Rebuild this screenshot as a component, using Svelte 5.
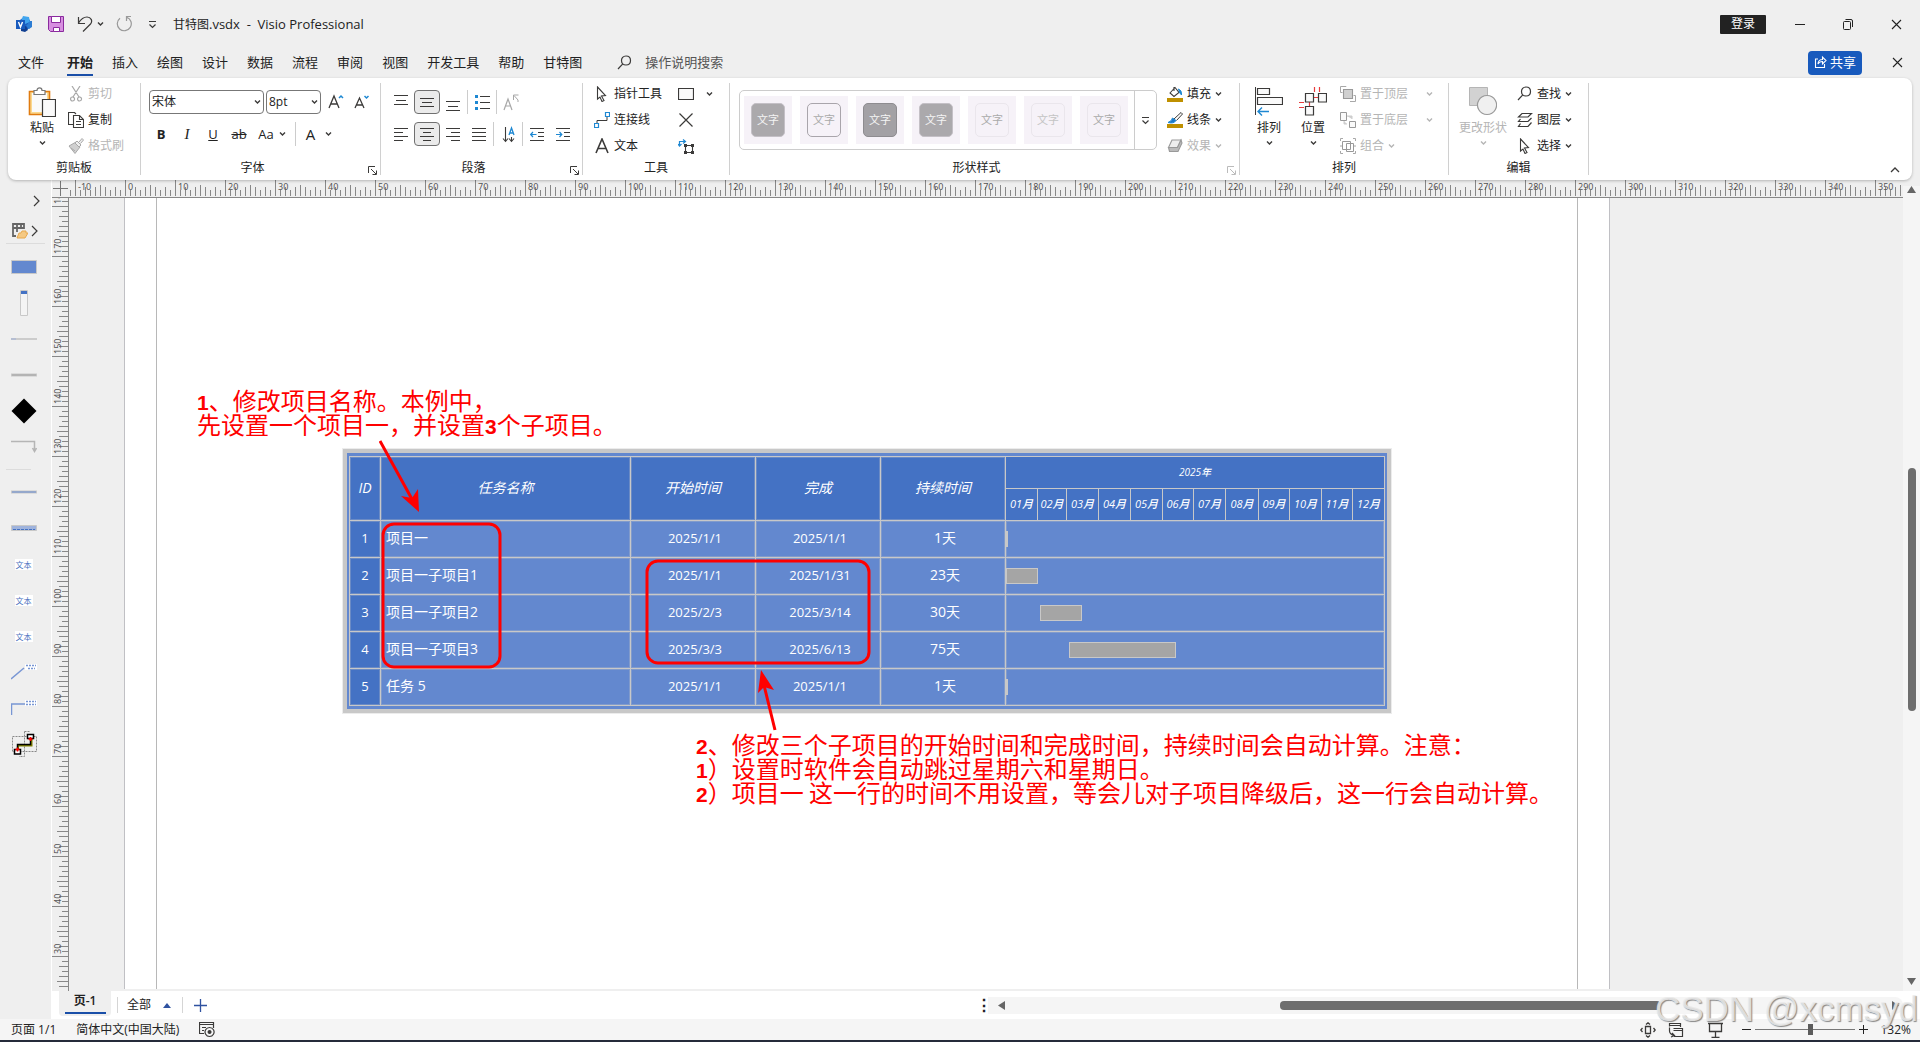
<script lang="ts">
  type Shape = [d: string, stroke?: string, fill?: string, width?: number];

  const ink = '#3b3a39';
  const blue = '#1e88d2';
  const dim = '#a8a8a8';
  const navy = '#2f52a0';

  const icons: Record<string, Shape[]> = {
    visio: [
      ['M8 1L14 4V12L8 15L4 12V4Z', 'none', '#1b5fc4'],
      ['M7 0L13 1L14 6L9 8L5 5Z', 'none', '#41a5ee'],
      ['M14 5H16V11L13 13L10 10Z', 'none', '#2b7cd3'],
      ['M5 12L10 10L12 14L9 16L5 15Z', 'none', '#103f91'],
      ['M0 4H9V13H0Z', 'none', '#185abd'],
      ['M2.500 6L4.500 11L6.500 6', '#fff', 'none', 1.4],
    ],
    save: [
      ['M.5 .5H15.500V15.500H2.500L.5 13.500Z', '#8a2a9e', '#d78fe0'],
      ['M3.500 .5H12.500V6.500H3.500Z', '#8a2a9e', '#fff'],
      ['M5.500 11.500H11.500V15.500H5.500Z', '#8a2a9e', '#fff'],
    ],
    undo: [['M1.500 1V7.500H8M1.500 7C4 3 7 1 10 1C14 1 16 5 13.500 8L6 15.500', ink, 'none', 1.2]],
    redo: [['M15 .5H10.500V5M10.800 1.200A7 7 0 1 1 4 2.200', '#999', 'none', 1.2]],
    customize: [['M1 1.500H8M1.500 4.500L4.500 7.500L7.500 4.500', ink, 'none', 1.2]],
    chevron: [['M1 1.500L3.500 4L6 1.500', ink, 'none', 1.4]],
    chevronDim: [['M1 1.500L3.500 4L6 1.500', '#b5b5b5', 'none', 1.4]],
    right: [['M1 1L6 6L1 11', ink, 'none', 1.2]],
    up: [['M1 6L5 2L9 6', ink, 'none', 1.3]],
    min: [['M0 5.500H10', '#222']],
    restore: [
      ['M.5 3.500Q.5 2.500 1.500 2.500H6.500Q7.500 2.500 7.500 3.500V9.500Q7.500 10.500 6.500 10.500H1.500Q.5 10.500 .5 9.500Z', '#222'],
      ['M2.500 .5H8Q9.500 .5 9.500 2V8', '#222'],
    ],
    close: [['M1 1L10 10M10 1L1 10', '#222', 'none', 1.1]],
    share: [['M4 4H1.500V12.500H10.500V9M4 9C4 6 6 4.500 8.500 4.500V2L12 5.500L8.500 9V6.500C6.500 6.500 5 7 4 9Z', '#fff', 'none', 1.1]],
    search: [['M9 1C12 1 13.500 3 13.500 5.500C13.500 8 12 10 9 10C6 10 4.500 8 4.500 5.500C4.500 3 6 1 9 1ZM5.800 8.800L1 14', ink, 'none', 1.2]],
    paste: [
      ['M1.500 4.500H21.500V27.500H1.500Z', '#e07b10', '#fbd98f', 1.6],
      ['M4 6H19V25H4Z', 'none', '#fafafa'],
      ['M6 7.500V3.500H9C9 0 14 0 14 3.500H17V7.500Z', '#777', '#fff', 1.2],
      ['M14.500 12.500H27.500V29.500H14.500Z', ink, '#fafafa', 1.2],
    ],
    cut: [['M4 0L11 11M12 0L5 11M4.500 11A2 2 0 1 0 4.600 15A2 2 0 1 0 4.500 11M11.500 11A2 2 0 1 0 11.600 15A2 2 0 1 0 11.500 11', dim, 'none', 1.2]],
    copy: [['M5 12.500H.5V.5H6.500L8 2M5.500 3.500H11.500L15.500 7.500V15.500H5.500ZM11.500 3.500V7.500H15.500M8 9.500H13M8 12.500H13', ink, '#fff', 1.1]],
    brush: [
      ['M1 8L8 4L12 9L7 15.500Z', dim, '#d0d0d0'],
      ['M7 5L9 3L13 7L11 9ZM11 4L14 .5L15.500 2L12.500 5.500M3 10L7 13', dim, '#eee'],
    ],
    fontUp: [['M1 14L6 2L11 14M3 10H9', ink, 'none', 1.3], ['M11 4L13 2L15 4', blue, 'none', 1.5]],
    fontDown: [['M1 14L5.500 4L10 14M2.500 11H8.500', ink, 'none', 1.3], ['M10.500 2L12.500 4L14.500 2', blue, 'none', 1.5]],
    alignTop: [['M0 1.500H14M2 6.500H12M0 10.500H14', ink]],
    alignMid: [['M0 4.500H14M2 8.500H12M0 12.500H14', ink]],
    alignBot: [['M0 7.500H14M2 12.500H12M0 16.500H14', ink]],
    bullets: [['M5 2.500H15M5 8.500H15M5 14.500H15', ink], ['M0 1H3V4H0ZM0 7H3V10H0ZM0 13H3V16H0Z', 'none', blue]],
    rotateText: [['M1 16L5 5L9 16M2.500 12H7.500', dim, 'none', 1.2], ['M15 8V6L11 1.500M10.500 6V1H15.500', dim]],
    left: [['M0 2.500H14M0 6.500H9M0 10.500H14M0 14.500H9', ink]],
    center: [['M0 2.500H14M3 6.500H11M0 10.500H14M3 14.500H11', ink]],
    rightAlign: [['M0 2.500H14M5 6.500H14M0 10.500H14M5 14.500H14', ink]],
    justify: [['M0 2.500H14M0 6.500H14M0 10.500H14M0 14.500H14', ink]],
    direction: [['M3.500 1V15M1 12.500L3.500 15.500L6 12.500M9.500 11V15M7 12.500L9.500 15.500L12 12.500', ink, 'none', 1.1], ['M7 9L9.500 2L12 9M8 7H11', blue, 'none', 1.3]],
    outdent: [['M0 2.500H14M8 6.500H14M8 10.500H14M0 14.500H14', ink], ['M6.500 8.500H1M3 6L.7 8.500L3 11', blue, 'none', 1.2]],
    indent: [['M0 2.500H14M8 6.500H14M8 10.500H14M0 14.500H14', ink], ['M0 8.500H5.500M3.500 6L5.800 8.500L3.500 11', blue, 'none', 1.2]],
    pointer: [['M3.500 1L11.500 9.500L7.500 10L10 14.500L8 15.500L6 11L3.500 13Z', ink, '#fff', 1.1]],
    connector: [['M3 11V8.500H13V5', ink], ['M.5 11.500H4.500V15.500H.5ZM11.500 .5H15.500V4.500H11.500Z', blue, '#fff', 1.2]],
    text: [['M2 15L8 1L14 15M4 10.500H12', ink, 'none', 1.6]],
    rect: [['M.5 2.500H15.500V13.500H.5Z', ink, '#fafafa', 1.2]],
    cross: [['M1.500 1.500L14.500 14.500M14.500 1.500L1.500 14.500', ink, 'none', 1.2]],
    textBlock: [
      ['M1.500 8V3.500H7M0 6L1.500 8L3.500 6M5 1.500L7.500 3.500L5 5.500', blue, 'none', 1.2],
      ['M7.500 7.500H14.500V14.500H7.500Z', ink, 'none', 1.1],
      ['M6 6H9V9H6ZM13 6H16V9H13ZM6 13H9V16H6ZM13 13H16V16H13Z', 'none', ink],
    ],
    fill: [['M3 7L8 1.500L12 6.500L7 10.500ZM7 1V5', ink, '#fff', 1.1], ['M11 3Q15 4 14.500 9L12 6', blue, blue], ['M0 12H16V16H0Z', 'none', '#bf9000']],
    line: [['M7 7L14 .5L15.500 2L9.500 8.500', ink, '#fff'], ['M1 10.500Q5 9 5.500 6L9 8.500Q7 12 1 10.500Z', blue, '#1e78c8'], ['M0 12H16V16H0Z', 'none', '#bf9000']],
    effect: [['M5 2H14L10.500 9.500H1.500Z', '#999', '#eee', 1.1], ['M1.500 9.500H10.500L14 2L15 5L11 13.500H2.500Z', '#999', '#bbb', 1.1]],
    align: [['M.5 0V28', ink], ['M2.500 1.500H14.500V7.500H2.500ZM2.500 10.500H27.500V17.500H2.500Z', ink, '#fafafa', 1.2], ['M14 24.500H3M7 20.500L3 24.500L7 28.500', blue, 'none', 1.4]],
    position: [['M15.500 0V5M20.500 0V5M0 15.500H5M0 20.500H5M15 10.500H20M10.500 15V20', '#e83c3c', 'none', 1.2], ['M6.500 6.500H14.500V15H6.500ZM19.500 6.500H27.500V15H19.500ZM6.500 19.500H14.500V28H6.500Z', ink, '#fafafa', 1.2]],
    front: [['M6 1V.5H.5V6.500H2.500M10 15.500H15.500V9.500H13.500', dim], ['M3.500 3.500H12.500V12.500H3.500Z', '#999', '#d0d0d0', 1.1]],
    back: [['M7 4H12V7M4 9V12H7', '#ccc', '#d0d0d0'], ['M.5 .5H6.500V8.500H.5ZM9.500 9.500H15.500V15.500H9.500Z', '#999', '#fafafa']],
    group: [['M.5 3V.5H3M13 .5H15.500V3M15.500 13V15.500H13M3 15.500H.5V13M0 8H3M13 8H16', dim], ['M2.500 3.500H10.500V11.500H2.500ZM6.500 5.500H13.500V13.500H6.500Z', '#999']],
    shapes: [['M.5 .5H18.500V18.500H.5Z', '#b5b5b5', '#d2d2d2'], ['M18 8.500A9.500 9.500 0 1 0 18.100 8.500Z', '#999', '#f0f0f0', 1.2]],
    layers: [['M5 1.500H14.500L11 5H1.500ZM3.500 7L1.500 9.500H11L14.500 6M3.500 11.500L1.500 14.500H11L14.500 10.500', ink, 'none', 1.2]],
    launcher: [['M.5 7V.5H7M3 3L8 8M8.500 4.500V8.500H4.500', ink]],
    launcherDim: [['M.5 7V.5H7M3 3L8 8M8.500 4.500V8.500H4.500', '#bbb']],
    stencil: [['M1 14V1H12V6M1 5H12M5 1V9M9 1V5M1 13H4', '#666', 'none', 1.8], ['M5 15L7 10H9L10 8H14V10H16L13 15Z', '#e8a94d', '#f5c983']],
    plus: [['M6.500 0V13M0 6.500H13', navy, 'none', 1.3]],
    macro: [['M5 11.500H.5V.5H14.500V6M1 2.500H14M3 5.500H7M3 8.500H5', ink, 'none', 1.2], ['M10.500 5.500A4.500 4.500 0 1 0 10.600 5.500Z', ink, '#f5f5f5', 1.2], ['M10.500 8A2 2 0 1 0 10.600 8Z', 'none', ink]],
    pan: [['M5.500 4.500H10.500V11.500H5.500ZM6 2.500L8 .8L10 2.500M6 13.500L8 15.200L10 13.500M2.500 6L.8 8L2.500 10M13.500 6L15.200 8L13.500 10', ink, 'none', 1.3]],
    windows: [['M1.500 4.500V1.500H12.500V5M1.500 3.500H12.500M5.500 6.500H14.500V14.500H6M5.500 8.500H14.500M1.500 5.500V9Q1.500 12 6 13.500M4 11L6.500 13.500L3 15', ink, 'none', 1.2]],
    present: [['M0 1.500H15M1.500 1.500V9.500H13.500V1.500M7.500 10V15M3.500 15.500H11.500', ink, 'none', 1.3]],
  };

  const tabs = ['插入', '绘图', '设计', '数据', '流程', '审阅', '视图', '开发工具', '帮助', '甘特图'];

  const styles = ['solid', 'outline', 'solid dark', 'solid', 'faint', 'faint pale', 'faint'];

  const months = [
    { label: '01月', width: 32 },
    { label: '02月', width: 29 },
    { label: '03月', width: 32 },
    { label: '04月', width: 32 },
    { label: '05月', width: 32 },
    { label: '06月', width: 31 },
    { label: '07月', width: 32 },
    { label: '08月', width: 33 },
    { label: '09月', width: 31 },
    { label: '10月', width: 32 },
    { label: '11月', width: 31 },
    { label: '12月', width: 32 },
  ];

  // from / to are day numbers inside 2025
  const tasks = [
    { id: 1, name: '项目一', start: '2025/1/1', end: '2025/1/1', span: '1天', from: 0, to: 1 },
    { id: 2, name: '项目一子项目1', start: '2025/1/1', end: '2025/1/31', span: '23天', from: 0, to: 31 },
    { id: 3, name: '项目一子项目2', start: '2025/2/3', end: '2025/3/14', span: '30天', from: 33, to: 73 },
    { id: 4, name: '项目一子项目3', start: '2025/3/3', end: '2025/6/13', span: '75天', from: 61, to: 164 },
    { id: 5, name: '任务 5', start: '2025/1/1', end: '2025/1/1', span: '1天', from: 0, to: 1 },
  ];

  const day = (n: number) => `${(n / 365) * 100}%`;

  // Rulers: one tick every 5px, a label every 50px
  let rulerWidth = $state(0);
  let rulerHeight = $state(0);

  const tickLength = (i: number) => (i % 10 === 0 ? 16 : i % 5 === 0 ? 11 : i % 2 === 0 ? 9 : 6);

  const topTicks = $derived.by(() => {
    let d = '';
    for (let i = -11; 56 + i * 5 < rulerWidth; i++) {
      d += `M${56.5 + i * 5} 16v-${tickLength(i)}`;
    }
    return d;
  });
  const topLabels = $derived(
    Array.from({ length: Math.max(0, Math.floor((rulerWidth - 25) / 50) + 1) }, (_, i) => (i - 1) * 10)
  );

  const sideTicks = $derived.by(() => {
    let d = '';
    for (let i = -1; 8 + i * 5 < rulerHeight; i++) {
      d += `M16 ${8.5 + i * 5}h-${tickLength(i)}`;
    }
    return d;
  });
  const sideLabels = $derived(
    Array.from({ length: Math.max(0, Math.floor(rulerHeight / 50) + 1) }, (_, i) => 180 - i * 10)
  );
</script>

{#snippet icon(name: string, w = 16, h = 16)}
  <svg class="icon" width={w} height={h} viewBox="0 0 {w} {h}" aria-hidden="true">
    {#each icons[name] as [d, stroke = '#3b3a39', fill = 'none', width = 1]}
      <path {d} {stroke} {fill} stroke-width={width} />
    {/each}
  </svg>
{/snippet}

{#snippet tool(name: string, label: string, arrow = false, disabled = false)}
  <button class="tool" {disabled}>
    {@render icon(name)}
    <span>{label}</span>
    {#if arrow}{@render icon(disabled ? 'chevronDim' : 'chevron', 7, 6)}{/if}
  </button>
{/snippet}

<div class="app">
  <header class="titlebar">
    {@render icon('visio')}
    <button class="save" aria-label="保存">{@render icon('save')}</button>
    <button class="undo" aria-label="撤消">{@render icon('undo')}{@render icon('chevron', 7, 6)}</button>
    <button class="redo" aria-label="恢复">{@render icon('redo')}</button>
    <button class="customize" aria-label="自定义">{@render icon('customize', 9, 9)}</button>
    <span>甘特图<span class="latin">.vsdx&nbsp; -&nbsp; Visio Professional</span></span>
    <div class="window-buttons">
      <button class="login">登录</button>
      <button aria-label="最小化">{@render icon('min', 10, 11)}</button>
      <button aria-label="还原">{@render icon('restore', 10, 11)}</button>
      <button aria-label="关闭">{@render icon('close', 11, 11)}</button>
    </div>
  </header>

  <nav class="tabs">
    <button class="file">文件</button>
    <button class="active">开始</button>
    {#each tabs as tab}
      <button>{tab}</button>
    {/each}
    <button class="tell-me">{@render icon('search', 15, 15)}操作说明搜索</button>
    <button class="share">{@render icon('share', 13, 14)}共享</button>
    <button class="close-doc" aria-label="关闭文档">{@render icon('close', 11, 11)}</button>
  </nav>

  <div class="ribbon">
    <section class="group clipboard">
      <div class="body">
        <button class="big">{@render icon('paste', 28, 31)}<span>粘贴</span>{@render icon('chevron', 7, 6)}</button>
        <div class="stack">
          {@render tool('cut', '剪切', false, true)}
          {@render tool('copy', '复制')}
          {@render tool('brush', '格式刷', false, true)}
        </div>
      </div>
      <h2>剪贴板</h2>
    </section>

    <section class="group font launchable">
      <div class="rows">
        <div class="row">
          <label class="combo family">
            <select aria-label="字体"><option>宋体</option></select>
            {@render icon('chevron', 7, 6)}
          </label>
          <label class="combo size">
            <select aria-label="字号"><option>8pt</option></select>
            {@render icon('chevron', 7, 6)}
          </label>
          <button class="flat" aria-label="增大字号">{@render icon('fontUp')}</button>
          <button class="flat" aria-label="减小字号">{@render icon('fontDown')}</button>
        </div>
        <div class="row letters">
          <button class="flat bold">B</button>
          <button class="flat italic">I</button>
          <button class="flat underline">U</button>
          <button class="flat strike">ab</button>
          <button class="flat wide">Aa{@render icon('chevron', 7, 6)}</button>
          <i class="sep"></i>
          <button class="flat wide colour">A{@render icon('chevron', 7, 6)}</button>
        </div>
      </div>
      <h2>字体</h2>
      <button class="launcher" aria-label="字体设置">{@render icon('launcher', 9, 9)}</button>
    </section>

    <section class="group paragraph launchable">
      <div class="rows">
        <div class="row">
          <button class="flat" aria-label="顶端对齐">{@render icon('alignTop', 14, 17)}</button>
          <button class="flat on" aria-label="中部对齐">{@render icon('alignMid', 14, 17)}</button>
          <button class="flat" aria-label="底端对齐">{@render icon('alignBot', 14, 17)}</button>
          <i class="sep"></i>
          <button class="flat" aria-label="项目符号">{@render icon('bullets', 15, 17)}</button>
          <i class="sep"></i>
          <button class="flat" aria-label="旋转文本">{@render icon('rotateText', 16, 17)}</button>
        </div>
        <div class="row">
          <button class="flat" aria-label="左对齐">{@render icon('left', 14, 17)}</button>
          <button class="flat on" aria-label="居中">{@render icon('center', 14, 17)}</button>
          <button class="flat" aria-label="右对齐">{@render icon('rightAlign', 14, 17)}</button>
          <button class="flat" aria-label="两端对齐">{@render icon('justify', 14, 17)}</button>
          <i class="sep"></i>
          <button class="flat" aria-label="文字方向">{@render icon('direction', 13, 17)}</button>
          <i class="sep"></i>
          <button class="flat" aria-label="减少缩进">{@render icon('outdent', 14, 17)}</button>
          <button class="flat" aria-label="增加缩进">{@render icon('indent', 14, 17)}</button>
        </div>
      </div>
      <h2>段落</h2>
      <button class="launcher" aria-label="段落设置">{@render icon('launcher', 9, 9)}</button>
    </section>

    <section class="group tools">
      <div class="body">
        <div class="stack">
          {@render tool('pointer', '指针工具')}
          {@render tool('connector', '连接线')}
          {@render tool('text', '文本')}
        </div>
        <div class="stack second">
          <button class="tool" aria-label="矩形">{@render icon('rect')}<span class="arrow">{@render icon('chevron', 7, 6)}</span></button>
          <button class="tool" aria-label="连接点">{@render icon('cross')}</button>
          <button class="tool" aria-label="文本块">{@render icon('textBlock')}</button>
        </div>
      </div>
      <h2>工具</h2>
    </section>

    <section class="group shape-styles launchable">
      <div class="body">
        <div class="gallery">
          {#each styles as style}
            <button class="swatch"><span class={style}>文字</span></button>
          {/each}
          <button class="more" aria-label="更多样式">{@render icon('customize', 9, 9)}</button>
        </div>
        <div class="stack">
          {@render tool('fill', '填充', true)}
          {@render tool('line', '线条', true)}
          {@render tool('effect', '效果', true, true)}
        </div>
      </div>
      <h2>形状样式</h2>
      <button class="launcher" disabled aria-label="形状样式设置">{@render icon('launcherDim', 9, 9)}</button>
    </section>

    <section class="group arrange">
      <div class="body">
        <button class="big">{@render icon('align', 28, 31)}<span>排列</span>{@render icon('chevron', 7, 6)}</button>
        <button class="big">{@render icon('position', 28, 31)}<span>位置</span>{@render icon('chevron', 7, 6)}</button>
        <div class="stack">
          <div class="split">{@render tool('front', '置于顶层', true, true)}</div>
          <div class="split">{@render tool('back', '置于底层', true, true)}</div>
          {@render tool('group', '组合', true, true)}
        </div>
      </div>
      <h2>排列</h2>
    </section>

    <section class="group edit">
      <div class="body">
        <button class="big" disabled>{@render icon('shapes', 28, 31)}<span>更改形状</span>{@render icon('chevronDim', 7, 6)}</button>
        <div class="stack">
          {@render tool('search', '查找', true)}
          {@render tool('layers', '图层', true)}
          {@render tool('pointer', '选择', true)}
        </div>
      </div>
      <h2>编辑</h2>
    </section>
    <button class="collapse" aria-label="折叠功能区">{@render icon('up', 10, 8)}</button>
  </div>

  <div class="main">
    <aside class="stencils">
      <button class="expand" aria-label="展开形状窗口">{@render icon('right', 8, 12)}</button>
      <button class="more-shapes" aria-label="更多形状">{@render icon('stencil')}{@render icon('right', 8, 12)}</button>
      <hr />
      <button class="shape" aria-label="甘特图框架"><svg width="26" height="26"><path d="M.5 6.500H25.500V19.500H.5Z" fill="#6388cf" stroke="#c8c8c8" /></svg></button>
      <button class="shape" aria-label="列"><svg width="26" height="26"><path d="M9.500 .5H16.500V25.500H9.500Z" fill="#f4f4f4" stroke="#c8c8c8" /><path d="M10 1H16V4H10Z" fill="#4472c4" /></svg></button>
      <button class="shape" aria-label="行"><svg width="26" height="26"><path d="M0 13H26" stroke="#ccc" stroke-width="2" /><path d="M0 13H5" stroke="#9fb0d8" /></svg></button>
      <button class="shape" aria-label="任务栏"><svg width="26" height="26"><path d="M0 13H26" stroke="#c8c8c8" stroke-width="3" /><path d="M1 13H25" stroke="#a0a0a0" /></svg></button>
      <button class="shape" aria-label="里程碑"><svg width="26" height="26"><path d="M13 .5L25.500 13L13 25.500L.5 13Z" fill="#000" /></svg></button>
      <button class="shape" aria-label="链接线"><svg width="26" height="26"><path d="M0 7.500H23.500V17M21.500 14L23.500 17.500L25.500 14" fill="none" stroke="#b5b5b5" stroke-width="1.500" /></svg></button>
      <hr class="short" />
      <button class="shape" aria-label="标题"><svg width="26" height="26"><path d="M0 13H26" stroke="#c8c8c8" stroke-width="3" /><path d="M1 13H25" stroke="#6388cf" /></svg></button>
      <button class="shape" aria-label="图例"><svg width="26" height="26"><path d="M.5 10.500H25.500V15.500H.5Z" fill="#9fb3dc" stroke="#c8c8c8" /><path d="M2 14.500H24" stroke="#4472c4" stroke-dasharray="3 1" /></svg></button>
      {#each [1, 2, 3] as n}
        <button class="shape text-shape" aria-label="文本块 {n}"><span>文本</span></button>
      {/each}
      <button class="shape" aria-label="斜线标注"><svg width="26" height="26"><path d="M14 5H26V11H14Z" fill="#fff" /><path d="M0 20L13 9" stroke="#7896d4" stroke-width="1.500" /><path d="M15 6.500H25M17 9.500H24" stroke="#7896d4" stroke-dasharray="2 1" stroke-width="1.500" /></svg></button>
      <button class="shape" aria-label="直角标注"><svg width="26" height="26"><path d="M14 5H26V11H14Z" fill="#fff" /><path d="M.5 20V9H14" fill="none" stroke="#7896d4" stroke-width="1.500" /><path d="M15 6.500H25M15 9.500H25" stroke="#7896d4" stroke-dasharray="2 1" stroke-width="1.500" /></svg></button>
      <button class="shape" aria-label="动态连接线">
        <svg width="26" height="26">
          <path d="M1.500 5.500H25.500V20.500H1.500ZM13.500 .5H19.500M13.500 .5V25.500H8" fill="none" stroke="#888" stroke-dasharray="2 1" />
          <path d="M7 20V14.500H20.500V7" fill="none" stroke="#808000" stroke-width="2" />
          <path d="M6.500 19V13.500H19.500V7" fill="none" stroke="#000" stroke-width="1.500" />
          <path d="M16.500 3.500H22.500V7.500H16.500ZM3.500 18.500H9.500V23H3.500Z" fill="#fff" stroke="#000" stroke-width="1.500" />
          <path d="M19.500 6V10M17.500 8H21.500M6.500 16.500V20.500M4.500 18.500H8.500" stroke="#f00" stroke-width="1.500" />
        </svg>
      </button>
    </aside>

    <div class="drawing">
      <div class="ruler-top">
        <svg class="corner" width="17" height="17"><path d="M8.500 1V16M1 8.500H16" stroke="#777" /></svg>
        <div class="ticks" bind:clientWidth={rulerWidth}>
          <svg width={rulerWidth} height="17">
            <path d={topTicks} stroke="#888" />
            {#each topLabels as n}
              <text x={59 + n * 5} y="10">{n}</text>
            {/each}
          </svg>
        </div>
      </div>
      <div class="view">
        <div class="ruler-side" bind:clientHeight={rulerHeight}>
          <svg width="17">
            <path d={sideTicks} stroke="#888" />
            {#each sideLabels as n, i}
              <text transform="translate(9 {6 + i * 50}) rotate(-90)">{n}</text>
            {/each}
          </svg>
        </div>
        <div class="workspace">
          <div class="page">
            <div class="margins"></div>

            <p class="note first"><b>1</b>、修改项目名称。本例中，<br />先设置一个项目一，并设置<b>3</b>个子项目。</p>

            <div class="gantt">
              <table>
                <colgroup>
                  <col class="id" /><col class="name" /><col class="date" /><col class="date" /><col class="date" />
                  {#each months as month}
                    <col style="width: {month.width}px" />
                  {/each}
                </colgroup>
                <thead>
                  <tr>
                    <th rowspan="2">ID</th>
                    <th rowspan="2">任务名称</th>
                    <th rowspan="2">开始时间</th>
                    <th rowspan="2">完成</th>
                    <th rowspan="2">持续时间</th>
                    <th class="year" colspan="12">2025年</th>
                  </tr>
                  <tr>
                    {#each months as month}
                      <th class="month">{month.label}</th>
                    {/each}
                  </tr>
                </thead>
                <tbody>
                  {#each tasks as task}
                    <tr>
                      <th class="number">{task.id}</th>
                      <td class="task">{task.name}</td>
                      <td class="when">{task.start}</td>
                      <td class="when">{task.end}</td>
                      <td class="span">{task.span}</td>
                      <td class="chart" colspan="12">
                        <div class="bar" style="left: {day(task.from)}; width: {day(task.to - task.from)}"></div>
                      </td>
                    </tr>
                  {/each}
                </tbody>
              </table>
            </div>

            <svg class="marks" width="600" height="320" aria-hidden="true">
              <g fill="none" stroke="#f00" stroke-width="3">
                <rect x="4" y="85" width="117" height="143" rx="11" />
                <rect x="268" y="122" width="222" height="102" rx="11" />
                <path d="M1 2L34 62M383 238L396 291" />
              </g>
              <path d="M40 73L22 57L33 59L39 50Z" fill="#f00" />
              <path d="M382 231L379 254L385 248L395 251Z" fill="#f00" />
            </svg>

            <p class="note second">
              <b>2</b>、修改三个子项目的开始时间和完成时间，持续时间会自动计算。注意：<br />
              <b>1</b>）设置时软件会自动跳过星期六和星期日。<br />
              <b>2</b>）项目一 这一行的时间不用设置，等会儿对子项目降级后，这一行会自动计算。
            </p>
          </div>
        </div>
        <div class="scroll-y">
          <svg width="9" height="7"><path d="M4.500 0L9 7H0Z" fill="#666" /></svg>
          <div class="rail"><div class="thumb"></div></div>
          <svg width="9" height="7"><path d="M0 0H9L4.500 7Z" fill="#666" /></svg>
        </div>
      </div>

      <div class="page-tabs">
        <button class="current">页-1</button>
        <i></i>
        <button class="all">全部<svg width="8" height="5"><path d="M4 0L8 5H0Z" fill="#2f52a0" /></svg></button>
        <i></i>
        <button class="add" aria-label="插入页">{@render icon('plus', 13, 13)}</button>
        <span class="dots">⋮</span>
        <div class="scroll-x">
          <svg width="7" height="9"><path d="M7 0V9L0 4.500Z" fill="#666" /></svg>
          <div class="rail"><div class="thumb"></div></div>
          <svg width="7" height="9"><path d="M0 0V9L7 4.500Z" fill="#666" /></svg>
        </div>
      </div>
    </div>
  </div>

  <footer class="status">
    <span>页面 1/1</span>
    <span class="language">简体中文(中国大陆)</span>
    {@render icon('macro')}
    <div class="zoom">
      <button aria-label="平移">{@render icon('pan')}</button>
      <button aria-label="切换窗口">{@render icon('windows')}</button>
      <button class="present" aria-label="演示模式">{@render icon('present')}</button>
      <button class="step" aria-label="缩小">{@render icon('min', 9, 11)}</button>
      <input type="range" min="0" max="100" value="55" aria-label="缩放" />
      <button class="step" aria-label="放大"><svg width="9" height="9"><path d="M4.500 0V9M0 4.500H9" stroke="#222" /></svg></button>
      <span class="percent">132%</span>
    </div>
  </footer>
  <div class="taskbar"></div>
  <div class="watermark">CSDN @xcmsyd</div>
</div>

<style>
  :global(body) {
    margin: 0;
  }

  .app {
    position: relative;
    display: flex;
    flex-direction: column;
    height: 100vh;
    overflow: hidden;
    background: #efefef;
    color: #222;
    font-family: 'Open Sans', 'Noto Sans CJK SC', sans-serif;
    font-size: 12px;
    line-height: 16px;
  }

  button {
    display: flex;
    align-items: center;
    padding: 0;
    border: 0;
    background: none;
    color: inherit;
    font: inherit;
    white-space: nowrap;
  }

  .icon {
    display: block;
    flex: none;
  }

  /* Title bar */
  .titlebar {
    display: flex;
    align-items: center;
    flex: none;
    height: 48px;
    padding-left: 16px;
  }

  .latin {
    font-size: 13px;
  }

  .save {
    margin-left: 16px;
  }

  .undo {
    gap: 4px;
    margin-left: 13px;
  }

  .redo {
    margin-left: 12px;
  }

  .customize {
    margin: 0 16px 0 16px;
  }

  .window-buttons {
    display: flex;
    align-items: center;
    gap: 38px;
    margin-left: auto;
    padding-right: 18px;
  }

  .login {
    height: 19px;
    padding: 0 11px;
    margin-right: -9px;
    border-radius: 1px;
    background: #222;
    color: #fff;
  }

  /* Tabs */
  .tabs {
    display: flex;
    align-items: center;
    flex: none;
    gap: 19px;
    height: 30px;
    padding: 0 17px 0 18px;
    font-size: 13px;
  }

  .tabs button {
    height: 26px;
    box-sizing: border-box;
    padding-bottom: 2px;
  }

  .tabs .file {
    margin-right: 4px;
  }

  .tabs .active {
    font-weight: 700;
    box-shadow: inset 0 -2px #1a4fa8;
  }

  .tabs .tell-me {
    gap: 13px;
    margin-left: 16px;
    color: #555;
  }

  .tabs .share {
    gap: 3px;
    height: 24px;
    margin-left: auto;
    padding: 0 6px 2px;
    border-radius: 4px;
    background: #185abd;
    color: #fff;
  }

  .close-doc {
    margin-left: 11px;
  }

  /* Ribbon */
  .ribbon {
    position: relative;
    z-index: 1;
    display: flex;
    flex: none;
    margin: 0 8px;
    padding: 3px 0;
    border-radius: 8px;
    background: #fff;
    box-shadow: 0 1px 3px rgba(0, 0, 0, 0.25);
  }

  .group {
    position: relative;
    box-sizing: border-box;
    margin: 2px 0;
    border-right: 1px solid #d0d0d0;
  }

  .group h2 {
    margin: 0;
    padding-top: 2px;
    font-size: 12px;
    font-weight: 400;
    line-height: 14px;
    text-align: center;
  }

  .launchable h2 {
    padding-right: 16px;
  }

  .body,
  .rows {
    display: flex;
    height: 76px;
  }

  .clipboard {
    width: 133px;
  }

  .font {
    width: 240px;
  }

  .paragraph {
    width: 202px;
  }

  .tools {
    width: 147px;
  }

  .shape-styles {
    width: 510px;
  }

  .arrange {
    width: 209px;
  }

  .edit {
    width: 140px;
  }

  .big {
    flex-direction: column;
    width: 50px;
    padding-top: 4px;
  }

  .big span {
    margin: 2px 0 4px;
  }

  .clipboard .big {
    margin: 0 1px 0 9px;
  }

  .stack {
    display: flex;
    flex-direction: column;
    margin-top: -2px;
  }

  .tool {
    gap: 4px;
    height: 26px;
  }

  button:disabled {
    color: #b5b5b5;
  }

  .rows {
    flex-direction: column;
    padding: 3px 0 9px 8px;
    height: 64px;
  }

  .row {
    display: flex;
    align-items: center;
    height: 32px;
  }

  .combo {
    position: relative;
    display: flex;
    align-items: center;
    justify-content: flex-end;
    box-sizing: border-box;
    height: 24px;
    margin-right: 2px;
    padding-right: 2px;
    border: 1px solid #777;
    border-radius: 4px;
    background: #fff;
  }

  .family {
    width: 115px;
  }

  .size {
    width: 55px;
  }

  .combo select {
    flex: 1;
    min-width: 0;
    padding: 0 0 0 2px;
    border: 0;
    background: none;
    color: inherit;
    font: inherit;
    appearance: none;
  }

  .flat {
    justify-content: center;
    box-sizing: border-box;
    width: 26px;
    height: 24px;
    font-size: 13px;
  }

  .on {
    border: 1px solid #707070;
    border-radius: 4px;
    background: #ebebeb;
  }

  .paragraph .rows {
    padding-left: 7px;
  }

  .sep {
    width: 1px;
    height: 24px;
    margin: 0 1px;
    background: #ccc;
  }

  .bold {
    font-weight: 700;
  }

  .italic {
    font-family: 'Liberation Serif', serif;
    font-style: italic;
    font-size: 15px;
  }

  .underline {
    text-decoration: underline;
  }

  .strike {
    text-decoration: line-through;
  }

  .wide {
    gap: 5px;
    width: 40px;
  }

  .letters {
    margin-left: -1px;
  }

  .letters .sep {
    margin: 0 4px 0 3px;
  }

  .colour {
    gap: 10px;
    width: 38px;
    font-size: 15px;
  }

  .launcher {
    position: absolute;
    right: 3px;
    bottom: 0;
  }

  .tools .stack {
    width: 84px;
    margin-left: 11px;
  }

  .tools .second {
    width: auto;
    margin-left: 0;
  }

  .arrow {
    margin-left: 8px;
  }

  .gallery {
    display: flex;
    align-items: center;
    gap: 8px;
    box-sizing: border-box;
    height: 60px;
    margin: 7px 10px 0 9px;
    padding-left: 4px;
    border: 1px solid #ccc;
    border-radius: 5px;
  }

  .swatch {
    justify-content: center;
    width: 48px;
    height: 48px;
    background: #f6f2f8;
    font-size: 11px;
  }

  .swatch span {
    box-sizing: border-box;
    width: 34px;
    border: 1px solid #eae6ec;
    border-radius: 5px;
    color: #aaa;
    line-height: 32px;
    text-align: center;
  }

  .swatch .solid {
    border-color: #c4c0c6;
    background: #aba9ac;
    color: #f4f4f4;
  }

  .swatch .dark {
    border-color: #8e8c90;
    background: #a3a1a5;
  }

  .swatch .outline {
    border-color: #a9a5ab;
  }

  .swatch .pale {
    color: #c4c4c4;
  }

  .more {
    justify-content: center;
    width: 22px;
    height: 58px;
    margin-left: -2px;
    border-left: 1px solid #ccc;
  }

  .arrange .body {
    padding-left: 7px;
  }

  .arrange .big {
    width: 44px;
  }

  .arrange .big + .stack {
    margin-left: 5px;
  }

  .split :global(.tool) {
    width: 93px;
  }

  .split :global(.tool span) {
    margin-right: auto;
  }

  .edit .big {
    width: 68px;
  }

  .collapse {
    position: absolute;
    right: 12px;
    bottom: 6px;
  }

  /* Stencil pane */
  .main {
    display: flex;
    flex: 1;
    min-height: 0;
  }

  .stencils {
    box-sizing: border-box;
    width: 52px;
    padding-top: 3px;
    border-right: 1px solid #fff;
  }

  .expand {
    height: 36px;
    margin-left: 33px;
  }

  .more-shapes {
    gap: 3px;
    height: 24px;
    margin-left: 12px;
  }

  .stencils hr {
    height: 1px;
    margin: 0 6px 5px;
    border: 0;
    background: #dcdcdc;
  }

  .stencils .short {
    margin: 4px 20px 4px 6px;
  }

  .shape {
    justify-content: center;
    width: 47px;
    height: 36px;
  }

  .text-shape span {
    padding: 0 1px;
    background: #fff;
    color: #4a72c0;
    font-size: 8px;
    line-height: 11px;
  }

  /* Drawing window */
  .drawing {
    display: flex;
    flex: 1;
    flex-direction: column;
    min-width: 0;
  }

  .ruler-top {
    display: flex;
    flex: none;
    height: 17px;
    margin-right: 17px;
    border-bottom: 1px solid #888;
  }

  .corner {
    flex: none;
  }

  .ticks {
    flex: 1;
    min-width: 0;
    overflow: hidden;
  }

  .ruler-top text,
  .ruler-side text {
    fill: #555;
    font-family: 'Noto Sans', sans-serif;
    font-size: 9px;
  }

  .view {
    display: flex;
    flex: 1;
    min-height: 0;
  }

  .ruler-side {
    flex: none;
    width: 16px;
    overflow: hidden;
    border-right: 1px solid #888;
  }

  .ruler-side svg {
    display: block;
    height: 100%;
  }

  .workspace {
    display: flex;
    flex: 1;
    min-width: 0;
    border-bottom: 2px solid #efefef;
  }

  .page {
    position: relative;
    flex: 1;
    margin: 0 293px 0 55px;
    border: solid #c0c0c4;
    border-width: 0 1px;
    background: #fff;
  }

  .margins {
    box-sizing: border-box;
    height: 100%;
    margin: 0 31px;
    border: solid #b8b8b8;
    border-width: 0 1px;
  }

  .note {
    position: absolute;
    margin: 0;
    color: #f00;
    font-family: 'Noto Sans CJK SC', sans-serif;
    font-size: 24px;
    line-height: 24px;
    white-space: nowrap;
  }

  .note b {
    font-family: 'Liberation Sans', sans-serif;
    font-size: 21px;
    line-height: 1px;
  }

  .first {
    left: 72px;
    top: 190px;
  }

  .second {
    left: 571px;
    top: 534px;
  }

  .gantt {
    position: absolute;
    left: 218px;
    top: 251px;
    box-sizing: border-box;
    width: 1048px;
    padding: 3px 2px;
    border: 4px solid #c8c8c8;
    background: #6388cf;
    box-shadow: 0 0 0 1px #ececec;
    color: #fff;
  }

  table {
    width: 100%;
    height: 250px;
    border-collapse: collapse;
    table-layout: fixed;
    font-size: 14px;
  }

  th,
  td {
    padding: 0 0 2px;
    border: 1px solid #c8c8c8;
    box-shadow: inset 0 0 0 1px rgba(200, 200, 200, 0.3);
    line-height: 18px;
  }

  th {
    background: #4472c4;
    font-weight: 400;
  }

  thead th {
    height: 29px;
    font-style: italic;
  }

  .id {
    width: 31px;
  }

  .name {
    width: 250px;
  }

  .date {
    width: 125px;
  }

  .year,
  .month {
    box-shadow: none;
    font-size: 10px;
    font-weight: 500;
  }

  .month {
    font-size: 11px;
  }

  .number,
  .when {
    font-size: 13px;
    font-weight: 500;
  }

  .task {
    padding-left: 5px;
  }

  .when,
  .span {
    padding-left: 4px;
    text-align: center;
  }

  .chart {
    position: relative;
  }

  .bar {
    position: absolute;
    top: calc(50% - 8px);
    box-sizing: border-box;
    height: 16px;
    border: 1px solid #c8c8c8;
    background: #a5a5a5;
  }

  .marks {
    position: absolute;
    left: 254px;
    top: 241px;
  }

  .scroll-y {
    display: flex;
    flex-direction: column;
    align-items: center;
    width: 17px;
    margin-top: -12px;
    padding: 0 0 6px;
    background: #f5f5f5;
  }

  .rail {
    position: relative;
    flex: 1;
  }

  .thumb {
    border-radius: 4px;
    background: #6e6e6e;
  }

  .scroll-y .thumb {
    position: absolute;
    top: 35%;
    left: -4px;
    width: 8px;
    height: 31%;
  }

  .page-tabs {
    display: flex;
    align-items: center;
    flex: none;
    height: 28px;
    background: #fff;
  }

  .page-tabs i {
    width: 1px;
    height: 16px;
    background: #d5d5d5;
  }

  .current {
    align-self: flex-start;
    justify-content: center;
    box-sizing: border-box;
    width: 52px;
    height: 25px;
    margin: 0 6px 0 7px;
    padding-bottom: 5px;
    border-radius: 0 0 4px 4px;
    background: linear-gradient(#1a4fa8, #1a4fa8) center bottom 2px / 41px 2px no-repeat #efefef;
    font-weight: 600;
  }

  .all {
    gap: 12px;
    margin: 0 11px 0 9px;
  }

  .add {
    margin-left: 11px;
  }

  .dots {
    margin-left: auto;
    font-size: 16px;
    font-weight: 700;
  }

  .scroll-x {
    display: flex;
    align-items: center;
    flex: 0 0 49%;
    height: 17px;
    margin: 0 17px 0 -4px;
    padding: 0 4px 0 10px;
    border-radius: 0 8px 8px 0;
    background: #f5f5f5;
    box-sizing: border-box;
  }

  .scroll-x .thumb {
    width: 43%;
    height: 9px;
    margin-left: 31%;
  }

  /* Status bar */
  .status {
    display: flex;
    align-items: center;
    flex: none;
    height: 21px;
    padding: 0 9px 0 11px;
    background: #f5f5f5;
  }

  .language {
    margin: 0 20px 0 20px;
  }

  .zoom {
    display: flex;
    align-items: center;
    gap: 12px;
    margin-left: auto;
  }

  .zoom .present {
    margin: 0 6px 0 12px;
  }

  .zoom input {
    width: 100px;
    height: 11px;
    margin: 0 -8px;
    background: linear-gradient(#777, #777) center / 100% 1px no-repeat;
    appearance: none;
  }

  .zoom input::-webkit-slider-thumb {
    width: 5px;
    height: 11px;
    background: #5c5c5c;
    appearance: none;
  }

  .taskbar {
    flex: none;
    height: 2px;
    background: #252b3a;
  }

  .watermark {
    position: absolute;
    right: 2px;
    bottom: 13px;
    color: rgba(236, 236, 236, 0.85);
    font-family: 'Liberation Sans', sans-serif;
    font-size: 35px;
    line-height: 40px;
    text-shadow: 1px 1px 1px #888;
    pointer-events: none;
  }
</style>
